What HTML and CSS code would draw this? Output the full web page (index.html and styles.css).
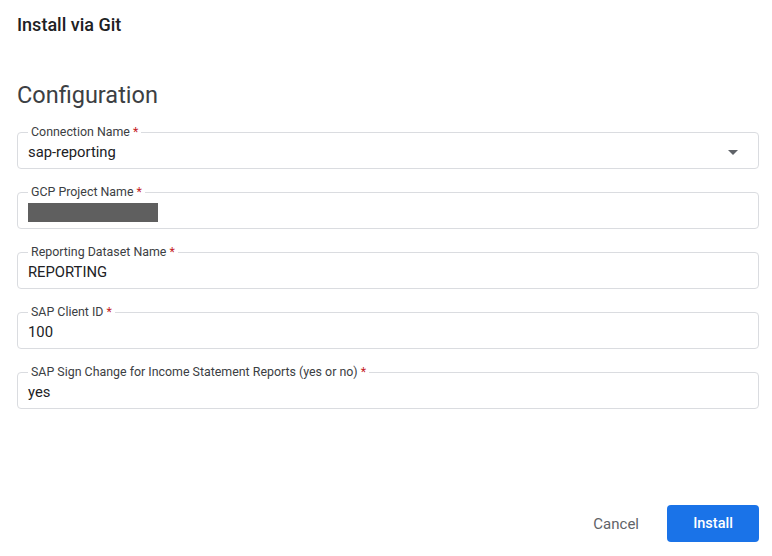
FILE: index.html
```html
<!DOCTYPE html>
<html lang="en">
<head>
    <meta charset="UTF-8">
    <meta name="viewport" content="width=device-width, initial-scale=1.0">
    <title>Install via Git</title>
    <link rel="stylesheet" href="styles.css">
</head>
<body>
    <div class="dialog">
        <div class="dialog-title">Install via Git</div>
        <div class="section-title">Configuration</div>

        <form class="config-form">
            <fieldset class="field">
                <legend>Connection Name <span class="req">*</span></legend>
                <div class="field-value select-value">
                    <span>sap-reporting</span>
                    <span class="arrow"></span>
                </div>
            </fieldset>

            <fieldset class="field">
                <legend>GCP Project Name <span class="req">*</span></legend>
                <div class="field-value"><span class="redacted"></span></div>
            </fieldset>

            <fieldset class="field">
                <legend>Reporting Dataset Name <span class="req">*</span></legend>
                <div class="field-value">REPORTING</div>
            </fieldset>

            <fieldset class="field">
                <legend>SAP Client ID <span class="req">*</span></legend>
                <div class="field-value">100</div>
            </fieldset>

            <fieldset class="field">
                <legend>SAP Sign Change for Income Statement Reports (yes or no) <span class="req">*</span></legend>
                <div class="field-value">yes</div>
            </fieldset>
        </form>

        <div class="actions">
            <button class="btn btn-text" type="button">Cancel</button>
            <button class="btn btn-primary" type="button">Install</button>
        </div>
    </div>
</body>
</html>
```

FILE: styles.css
```css
* {
    margin: 0;
    padding: 0;
    box-sizing: border-box;
}

body {
    font-family: Roboto, 'Liberation Sans', sans-serif;
    background-color: #fff;
    color: #202124;
}

.dialog {
    display: flex;
    flex-direction: column;
    height: 556px;
    padding: 14px 13px 14px 17px;
}

.dialog-title {
    font-size: 18px;
    font-weight: 500;
    line-height: 22px;
    color: #202124;
}

.section-title {
    font-size: 23.5px;
    font-weight: 400;
    line-height: 28px;
    color: #3c4043;
    margin-top: 45px;
}

.config-form {
    margin-top: 17px;
}

.field {
    border: 1px solid #dadce0;
    border-radius: 4px;
    margin-bottom: 17px;
    padding: 0 12px 0 10px;
}

.field legend {
    font-size: 12.4px;
    line-height: 12px;
    color: #3c4043;
    padding: 0 3px;
}

.req {
    color: #c5221f;
}

.field-value {
    font-size: 14.8px;
    line-height: 20px;
    color: #202124;
    padding: 4px 0 6px;
    min-height: 30px;
}

.select-value {
    display: flex;
    justify-content: space-between;
    align-items: center;
}

.arrow {
    width: 0;
    height: 0;
    border-left: 5px solid transparent;
    border-right: 5px solid transparent;
    border-top: 5px solid #5f6368;
    margin-right: 8px;
}

.redacted {
    display: block;
    width: 130px;
    height: 19px;
    background-color: #5f5f5f;
    margin-top: 1px;
}

.actions {
    margin-top: auto;
    display: flex;
    justify-content: flex-end;
    gap: 4px;
}

.btn {
    font-family: Roboto, 'Liberation Sans', sans-serif;
    font-size: 14.5px;
    font-weight: 500;
    height: 37px;
    padding: 0 24px;
    border: none;
    border-radius: 4px;
    background: none;
    cursor: pointer;
}

.btn-text {
    color: #5f6368;
    font-size: 15px;
    font-weight: 400;
}

.btn-primary {
    background-color: #1a73e8;
    color: #fff;
    width: 92px;
}
```
